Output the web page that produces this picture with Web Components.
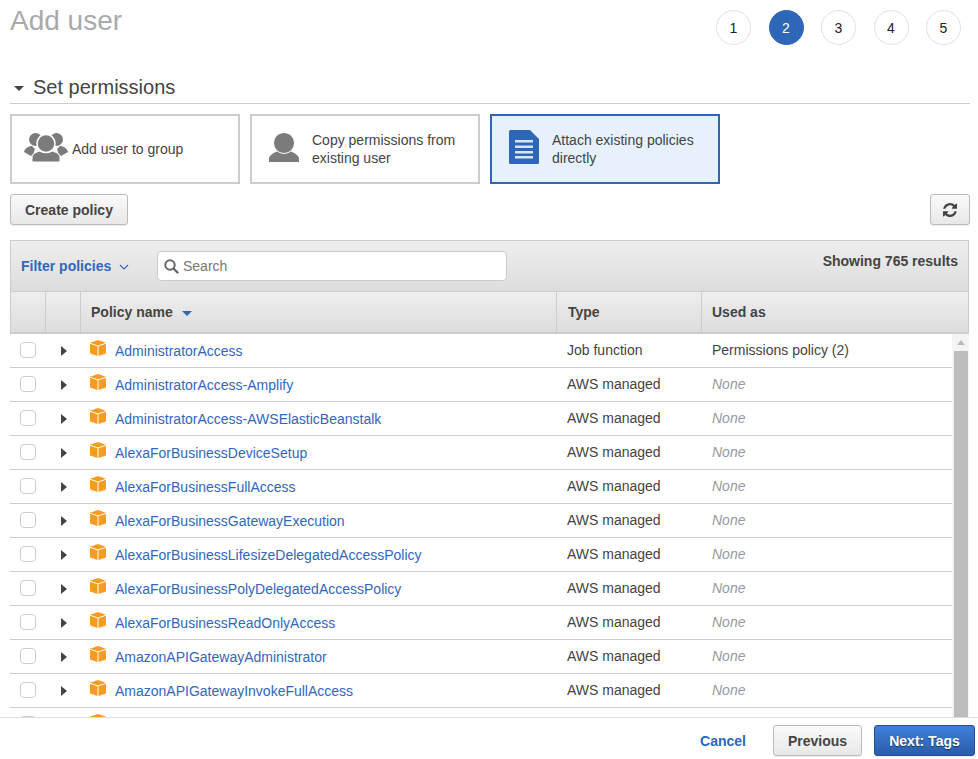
<!DOCTYPE html>
<html>
<head>
<meta charset="utf-8">
<title>Add user</title>
<style>
  html, body { margin: 0; height: 100%; overflow: hidden; background: #fff; }
  body { font: 14px/18px "Liberation Sans", Arial, sans-serif; color: #444; }
</style>
</head>
<body>
<add-user-page></add-user-page>

<script>
(function () {
  const ICONS = {
    group: `<svg width="44" height="29" viewBox="0 0 44 29"><g fill="#7b7b7b"><circle cx="11.500" cy="6.500" r="6.500"/><circle cx="32.500" cy="6.500" r="6.500"/><path d="M0 19c1-4 5-6 8-6l3 3c-1 2-1 4-2 5l-2 2z"/><path d="M44 19c-1-4-5-6-8-6l-3 3c1 2 1 4 2 5l2 2z"/></g><path d="M8 29v-4c0-4 4-6 8-7 3 2 9 2 12 0 4 1 8 3 8 7v4z" fill="#7b7b7b" stroke="#fff" stroke-width="1"/><circle cx="22" cy="10.500" r="9" fill="#7b7b7b" stroke="#fff" stroke-width="1.500"/></svg>`,
    user: `<svg width="30" height="29" viewBox="0 0 30 29"><path d="M0 29v-3c0-4 5-6 9-8h12c4 2 9 4 9 8v3z" fill="#7b7b7b"/><circle cx="15" cy="10" r="10.500" fill="#7b7b7b" stroke="#fff" stroke-width="1"/></svg>`,
    doc: `<svg width="30" height="34" viewBox="0 0 30 34"><path d="M1.500 0H21l9 9v23.500a1.500 1.500 0 0 1-1.500 1.500h-27A1.500 1.500 0 0 1 0 32.500v-31A1.500 1.500 0 0 1 1.500 0z" fill="#2e66b8"/><path d="M6 10h18v2.500H6zM6 15.500h18V18H6zM6 21h18v2.500H6zM6 26h18v2.500H6z" fill="#d9e6f7"/></svg>`,
    refresh: `<svg width="14" height="14" viewBox="0 0 1536 1536"><path fill="#444" d="M1511 928q0 5-1 7-64 268-268 434.500t-478 166.500q-146 0-282.500-55t-243.500-157l-129 129q-19 19-45 19t-45-19-19-45v-448q0-26 19-45t45-19h448q26 0 45 19t19 45-19 45l-137 137q71 66 161 102t187 36q134 0 250-65t186-179q11-17 53-117 8-23 30-23h192q13 0 22.500 9.500t9.500 22.500zm25-800v448q0 26-19 45t-45 19h-448q-26 0-45-19t-19-45 19-45l138-138q-148-137-349-137-134 0-250 65t-186 179q-11 17-53 117-8 23-30 23h-199q-13 0-22.500-9.500t-9.500-22.500v-7q65-268 270-434.500t480-166.500q146 0 284 55.500t245 156.500l130-129q19-19 45-19t45 19 19 45z"/></svg>`,
    cube: `<svg width="16" height="16" viewBox="0 0 16 16"><path d="M8 0l8 2.800L8 5.400 0 2.800z" fill="#f79c22"/><path d="M0 3.700l7.500 2.500V16L0 13.500z" fill="#f79c22"/><path d="M16 3.700L8.500 6.200V16l7.500-2.500z" fill="#f79c22"/></svg>`
  };

  customElements.define('step-dot', class extends HTMLElement {
    constructor() {
      super();
      this.attachShadow({ mode: 'open' }).innerHTML = `
        <style>
          :host { display: flex; align-items: center; justify-content: center; box-sizing: border-box;
            width: 35px; height: 35px; border-radius: 50%; border: 1px solid #e1e1e1; background: #fff;
            color: #222; font-size: 14px; }
          :host([active]) { background: #2e66b8; border-color: #2e66b8; color: #fff; }
        </style><slot></slot>`;
    }
  });

  customElements.define('perm-card', class extends HTMLElement {
    constructor() {
      super();
      this.attachShadow({ mode: 'open' }).innerHTML = `
        <style>
          :host { display: flex; align-items: center; box-sizing: border-box; width: 230px; height: 70px;
            border: 2px solid #ccc; background: #fff; color: #444; }
          :host([selected]) { border-color: #2e66b8; background: #e6f1fd; }
          .icon { flex: 0 0 60px; box-sizing: border-box; display: flex; justify-content: center; padding-left: var(--icon-pad, 4px); }
          .text { flex: 1; padding-right: 12px; }
        </style>
        <div class="icon"><slot name="icon"></slot></div>
        <div class="text"><slot></slot></div>`;
    }
  });

  customElements.define('aws-button', class extends HTMLElement {
    constructor() {
      super();
      this.attachShadow({ mode: 'open' }).innerHTML = `
        <style>
          :host { display: inline-flex; align-items: center; justify-content: center; box-sizing: border-box;
            height: 31px; padding: 0 14px; border: 1px solid #bbb; border-radius: 3px;
            background: linear-gradient(#fafafa, #e8e8e8); color: #444; font-weight: bold; font-size: 14px;
            box-shadow: 0 1px 1px rgba(0,0,0,.08); }
          :host([primary]) { background: linear-gradient(#3f7fdc, #2a5da9); border-color: #1f4f96; color: #fff;
            text-shadow: 0 1px 1px rgba(0,0,0,.5); }
        </style><slot></slot>`;
    }
  });

  customElements.define('policy-row', class extends HTMLElement {
    constructor() {
      super();
      this.attachShadow({ mode: 'open' }).innerHTML = `
        <style>
          :host { display: grid; grid-template-columns: 36px 35px 476px 145px 1fr; flex: none; box-sizing: border-box;
            height: 34px; border-bottom: 1px solid #ccc; align-items: center; }
          .check { width: 16px; height: 16px; box-sizing: border-box; margin: -1px 0 0 10px; border: 1px solid #ccc; border-radius: 4px; background: #fff; }
          .arrow { width: 0; height: 0; margin-left: 15px; border-left: 6px solid #444; border-top: 5px solid transparent; border-bottom: 5px solid transparent; }
          .name { display: flex; align-items: center; padding-left: 9px; }
          .name svg { flex: none; margin: -6px 9px 0 0; }
          a { color: #3367bd; text-decoration: none; }
          .type, .used { padding: 0 0 2px 10px; }
          .none { color: #999; font-style: italic; }
        </style>
        <div class="check"></div>
        <div class="arrow"></div>
        <div class="name">${ICONS.cube}<a></a></div>
        <div class="type"></div>
        <div class="used"></div>`;
    }
    connectedCallback() {
      const r = this.shadowRoot;
      r.querySelector('a').textContent = this.getAttribute('name') || '';
      r.querySelector('.type').textContent = this.getAttribute('type') || '';
      const used = r.querySelector('.used');
      used.textContent = this.getAttribute('used') || '';
      if (used.textContent === 'None') used.classList.add('none');
    }
  });

  customElements.define('policy-table', class extends HTMLElement {
    constructor() {
      super();
      this.attachShadow({ mode: 'open' }).innerHTML = `
        <style>
          :host { display: flex; flex-direction: column; flex: 1; min-height: 0; margin-right: 1px; }
          .bar { display: flex; flex: none; box-sizing: border-box; height: 52px; padding: 10px 10px 0 10px; border: 1px solid #ccc; background: linear-gradient(#eee, #ddd); }
          .filter { display: flex; align-items: center; height: 30px; width: 136px; color: #3367bd; font-weight: bold; }
          .filter svg { margin-left: 8px; margin-top: 2px; }
          .search { display: flex; align-items: center; box-sizing: border-box; width: 350px; height: 30px; padding-left: 6px; border: 1px solid #ccc; border-radius: 4px; background: #fff; color: #777; }
          .search svg { margin-right: 4px; }
          .count { margin-left: auto; font-weight: bold; color: #444; line-height: 20px; }
          .head { display: grid; grid-template-columns: 34px 35px 476px 145px 1fr; flex: none; box-sizing: border-box; height: 43px; margin-top: -1px; border: 1px solid #ccc; border-width: 1px 1px 2px; background: linear-gradient(#eee, #ddd); font-weight: bold; }
          .head div { display: flex; align-items: center; padding-left: 10px; border-left: 1px solid #ccc; }
          .head div:first-child { border-left: 0; }
          .head .name svg { margin-left: 9px; margin-top: 2px; }
          .head .type { padding-left: 11px; }
          .body { display: flex; flex: 1; min-height: 0; overflow: hidden; }
          .rows { flex: 1; min-width: 0; overflow: hidden; display: flex; flex-direction: column; }
          .track { flex: 0 0 17px; display: flex; flex-direction: column; align-items: center; background: #f4f4f4; }
          .up { flex: none; width: 0; height: 0; margin: 6px 0 6px; border-left: 4px solid transparent; border-right: 4px solid transparent; border-bottom: 5px solid #bbb; }
          .thumb { flex: 1; width: 14px; background: #bdbdbd; }
        </style>
        <div class="bar">
          <div class="filter">Filter policies<svg width="10" height="6" viewBox="0 0 10 6"><path d="M1 1l4 4 4-4" fill="none" stroke="#3367bd" stroke-width="1.200"/></svg></div>
          <div class="search"><svg width="15" height="15" viewBox="0 0 15 15"><circle cx="6" cy="6" r="4.700" fill="none" stroke="#666" stroke-width="2"/><path d="M9.500 9.500l4 4" stroke="#666" stroke-width="2.400" stroke-linecap="round"/></svg>Search</div>
          <div class="count">Showing 765 results</div>
        </div>
        <div class="head">
          <div></div><div></div>
          <div class="name">Policy name<svg width="10" height="5" viewBox="0 0 10 5"><path d="M0 0h10L5 5z" fill="#2e66b8"/></svg></div>
          <div class="type">Type</div>
          <div>Used as</div>
        </div>
        <div class="body">
          <div class="rows"><slot></slot></div>
          <div class="track"><div class="up"></div><div class="thumb"></div></div>
        </div>`;
    }
  });

  const POLICIES = [
    ['AdministratorAccess', 'Job function', 'Permissions policy (2)'],
    ['AdministratorAccess-Amplify', 'AWS managed', 'None'],
    ['AdministratorAccess-AWSElasticBeanstalk', 'AWS managed', 'None'],
    ['AlexaForBusinessDeviceSetup', 'AWS managed', 'None'],
    ['AlexaForBusinessFullAccess', 'AWS managed', 'None'],
    ['AlexaForBusinessGatewayExecution', 'AWS managed', 'None'],
    ['AlexaForBusinessLifesizeDelegatedAccessPolicy', 'AWS managed', 'None'],
    ['AlexaForBusinessPolyDelegatedAccessPolicy', 'AWS managed', 'None'],
    ['AlexaForBusinessReadOnlyAccess', 'AWS managed', 'None'],
    ['AmazonAPIGatewayAdministrator', 'AWS managed', 'None'],
    ['AmazonAPIGatewayInvokeFullAccess', 'AWS managed', 'None'],
    ['', '', '']
  ];

  customElements.define('add-user-page', class extends HTMLElement {
    constructor() {
      super();
      const rows = POLICIES.map(p => `<policy-row name="${p[0]}" type="${p[1]}" used="${p[2]}"></policy-row>`).join('');
      this.attachShadow({ mode: 'open' }).innerHTML = `
        <style>
          :host { display: flex; flex-direction: column; height: 759px; }
          .main { flex: 1; min-height: 0; display: flex; flex-direction: column; padding: 0 8px 0 10px; overflow: hidden; }
          .top { display: flex; flex: none; justify-content: space-between; height: 35px; padding-top: 10px; }
          h1 { margin: -9px 0 0; font-size: 28px; line-height: 40px; font-weight: normal; color: #aaa; }
          .steps { display: flex; gap: 17.500px; margin-right: 9px; }
          .section { display: flex; flex: none; align-items: center; height: 32px; margin-top: 26px; border-bottom: 1px solid #ccc; font-size: 20px; color: #444; }
          .caret { width: 0; height: 0; margin: 3px 9px 0 4px; border-left: 5px solid transparent; border-right: 5px solid transparent; border-top: 5px solid #444; }
          .cards { display: flex; flex: none; gap: 10px; margin-top: 10px; }
          .group { --icon-pad: 8px; }
          .tools { display: flex; flex: none; justify-content: space-between; margin: 10px 0 15px; }
          .footer { display: flex; flex: none; align-items: center; justify-content: flex-end; box-sizing: border-box; height: 42px; padding: 4px 3px 0 0; border-top: 1px solid #ddd; background: #fff; }
          .cancel { margin-right: 27px; color: #2e66b8; font-weight: bold; }
          .prev { width: 89px; margin-right: 12px; }
          .next { width: 101px; }
          .refresh { width: 40px; padding: 0; }
        </style>
        <div class="main">
          <div class="top">
            <h1>Add user</h1>
            <div class="steps">
              <step-dot>1</step-dot><step-dot active>2</step-dot><step-dot>3</step-dot><step-dot>4</step-dot><step-dot>5</step-dot>
            </div>
          </div>
          <div class="section"><span class="caret"></span>Set permissions</div>
          <div class="cards">
            <perm-card class="group"><span slot="icon">${ICONS.group}</span>Add user to group</perm-card>
            <perm-card><span slot="icon">${ICONS.user}</span>Copy permissions from existing user</perm-card>
            <perm-card selected><span slot="icon">${ICONS.doc}</span>Attach existing policies directly</perm-card>
          </div>
          <div class="tools">
            <aws-button>Create policy</aws-button>
            <aws-button class="refresh">${ICONS.refresh}</aws-button>
          </div>
          <policy-table>${rows}</policy-table>
        </div>
        <div class="footer">
          <span class="cancel">Cancel</span>
          <aws-button class="prev">Previous</aws-button>
          <aws-button class="next" primary>Next: Tags</aws-button>
        </div>`;
    }
  });
})();
</script>
</body>
</html>
